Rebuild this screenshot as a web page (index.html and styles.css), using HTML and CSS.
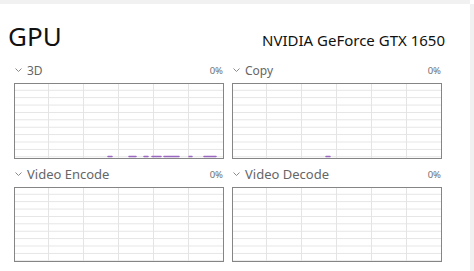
FILE: index.html
```html
<!DOCTYPE html>
<html lang="en">
<head>
<meta charset="utf-8">
<title>GPU</title>
<link rel="stylesheet" href="styles.css">
</head>
<body>
<div class="window">
  <div class="main">
    <div class="topbar"></div>
    <header class="head">
      <h1 class="title">GPU</h1>
      <div class="model">NVIDIA GeForce GTX 1650</div>
    </header>
    <div class="grid">
      <section class="panel">
        <div class="label">
          <svg class="chev" width="7" height="4" viewBox="0 0 7 4"><path d="M0.5 0.5 L3.5 3.5 L6.5 0.5" fill="none" stroke="#8a8a8a" stroke-width="1"/></svg>
          <span class="name">3D</span>
          <span class="pct">0%</span>
        </div>
        <div class="graph">
          <svg class="usage" width="208" height="74" viewBox="0 0 208 74">
            <g stroke="#9a68c0" stroke-width="1.5" stroke-linecap="round">
              <line x1="93" y1="72.5" x2="97" y2="72.5"/>
              <line x1="114" y1="72.5" x2="121" y2="72.5"/>
              <line x1="129" y1="72.5" x2="133" y2="72.5"/>
              <line x1="137" y1="72.5" x2="146" y2="72.5"/>
              <line x1="149" y1="72.5" x2="164" y2="72.5"/>
              <line x1="174" y1="72.5" x2="177" y2="72.5"/>
              <line x1="189" y1="72.5" x2="201" y2="72.5"/>
            </g>
          </svg>
        </div>
      </section>
      <section class="panel">
        <div class="label">
          <svg class="chev" width="7" height="4" viewBox="0 0 7 4"><path d="M0.5 0.5 L3.5 3.5 L6.5 0.5" fill="none" stroke="#8a8a8a" stroke-width="1"/></svg>
          <span class="name">Copy</span>
          <span class="pct">0%</span>
        </div>
        <div class="graph">
          <svg class="usage" width="208" height="74" viewBox="0 0 208 74">
            <g stroke="#9a68c0" stroke-width="1.5" stroke-linecap="round">
              <line x1="93" y1="72.5" x2="97" y2="72.5"/>
            </g>
          </svg>
        </div>
      </section>
      <section class="panel lower">
        <div class="label">
          <svg class="chev" width="7" height="4" viewBox="0 0 7 4"><path d="M0.5 0.5 L3.5 3.5 L6.5 0.5" fill="none" stroke="#8a8a8a" stroke-width="1"/></svg>
          <span class="name">Video Encode</span>
          <span class="pct">0%</span>
        </div>
        <div class="graph short"></div>
      </section>
      <section class="panel lower">
        <div class="label">
          <svg class="chev" width="7" height="4" viewBox="0 0 7 4"><path d="M0.5 0.5 L3.5 3.5 L6.5 0.5" fill="none" stroke="#8a8a8a" stroke-width="1"/></svg>
          <span class="name">Video Decode</span>
          <span class="pct">0%</span>
        </div>
        <div class="graph short"></div>
      </section>
    </div>
  </div>
  <div class="side"></div>
</div>
</body>
</html>
```

FILE: styles.css
```css
* { box-sizing: border-box; }
html, body {
  margin: 0;
  padding: 0;
  background: #ffffff;
  font-family: "Noto Sans", "Open Sans", sans-serif;
}
.window {
  display: flex;
  width: 474px;
  height: 271px;
  overflow: hidden;
}
.main {
  width: 470px;
  display: flex;
  flex-direction: column;
}
.side {
  width: 4px;
  background: #f1f1f1;
  margin-top: 4px;
}
.topbar {
  height: 4px;
  background: #f1f1f1;
}
.head {
  display: flex;
  justify-content: space-between;
  align-items: baseline;
  padding: 19px 25px 0 8px;
}
.title {
  margin: 0;
  font-weight: 400;
  font-size: 26px;
  line-height: 26px;
  color: #111;
}
.model {
  font-size: 15px;
  line-height: 18px;
  color: #111;
}
.grid {
  display: grid;
  grid-template-columns: 210px 210px;
  column-gap: 8px;
  row-gap: 6px;
  padding-left: 14px;
  margin-top: 12px;
}
.label {
  display: flex;
  align-items: center;
  height: 18px;
  margin-bottom: 4px;
  color: #666;
}
.chev {
  margin-left: 1px;
  margin-right: 5px;
  flex: none;
}
.name {
  font-size: 12px;
  flex: 1;
}
.lower .name {
  font-size: 13px;
}
.pct {
  font-size: 9.5px;
  color: #6e6e6e;
  margin-right: 1px;
}
.graph {
  position: relative;
  height: 76px;
  border: 1px solid #858585;
  background-color: #fff;
  background-image:
    linear-gradient(to right, #e4e4e4 1px, transparent 1px),
    linear-gradient(to bottom, #e4e4e4 1px, transparent 1px);
  background-size: 35px 100%, 100% 7.4px;
  background-position: -2px 0, 0 -1.6px;
}
.graph.short {
  height: 75px;
}
.usage {
  position: absolute;
  left: 0;
  top: 0;
}
```
